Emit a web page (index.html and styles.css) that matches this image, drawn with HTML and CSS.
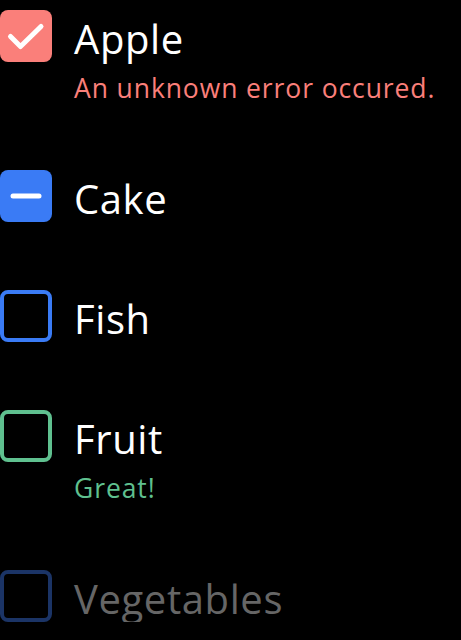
FILE: index.html
```html
<!DOCTYPE html>
<html lang="en">
<head>
<meta charset="utf-8">
<title>Checkboxes</title>
<link rel="stylesheet" href="styles.css">
</head>
<body>
<ul class="list">
  <li class="item item--error">
    <span class="box box--checked">
      <svg viewBox="0 0 52 52" width="52" height="52"><path d="M10.5 26.5 L20.5 36.5 L41 16.5" fill="none" stroke="#fff" stroke-width="5" stroke-linecap="round" stroke-linejoin="round"/></svg>
    </span>
    <span class="label">Apple</span>
    <span class="helper">An unknown error occured.</span>
  </li>
  <li class="item">
    <span class="box box--mixed">
      <svg viewBox="0 0 52 52" width="52" height="52"><path d="M13 26 L39 26" fill="none" stroke="#fff" stroke-width="5" stroke-linecap="round"/></svg>
    </span>
    <span class="label">Cake</span>
  </li>
  <li class="item">
    <span class="box box--focus"></span>
    <span class="label">Fish</span>
  </li>
  <li class="item item--success">
    <span class="box box--success"></span>
    <span class="label">Fruit</span>
    <span class="helper">Great!</span>
  </li>
  <li class="item item--disabled">
    <span class="box box--disabled"></span>
    <span class="label">Vegetables</span>
  </li>
</ul>
</body>
</html>
```
FILE: styles.css
```css
html, body {
  margin: 0;
  padding: 0;
  background: #000;
}
body {
  font-family: "Open Sans", Lato, sans-serif;
  color: #fff;
}
.list {
  list-style: none;
  margin: 0;
  padding: 10px 0 0 0;
}
.item {
  display: grid;
  grid-template-columns: 52px 1fr;
  column-gap: 22px;
  align-items: center;
  margin-bottom: 68px;
}
.item:last-child {
  margin-bottom: 0;
}
.box {
  box-sizing: border-box;
  width: 52px;
  height: 52px;
  border-radius: 8px;
  display: block;
}
.box svg { display: block; }
.box--checked { background: #fa7f7a; }
.box--mixed { background: #3a7bf5; }
.box--focus { border: 4px solid #3a7bf5; }
.box--success { border: 4px solid #5fc08f; }
.box--disabled { border: 4px solid #1b3466; }
.label {
  font-size: 40px;
  font-weight: 400;
  letter-spacing: 0.6px;
  line-height: 52px;
  padding-top: 3px;
  height: 52px;
  box-sizing: border-box;
  white-space: nowrap;
}
.helper {
  grid-column: 2;
  font-size: 26.5px;
  font-weight: 400;
  letter-spacing: 0.9px;
  line-height: 40px;
  height: 40px;
  margin-top: 6px;
  margin-bottom: -6px;
  white-space: nowrap;
}
.item--error .helper { color: #fa7f7a; }
.item--success .helper { color: #5fc08f; }
.item--disabled .label { color: #666; }
```
